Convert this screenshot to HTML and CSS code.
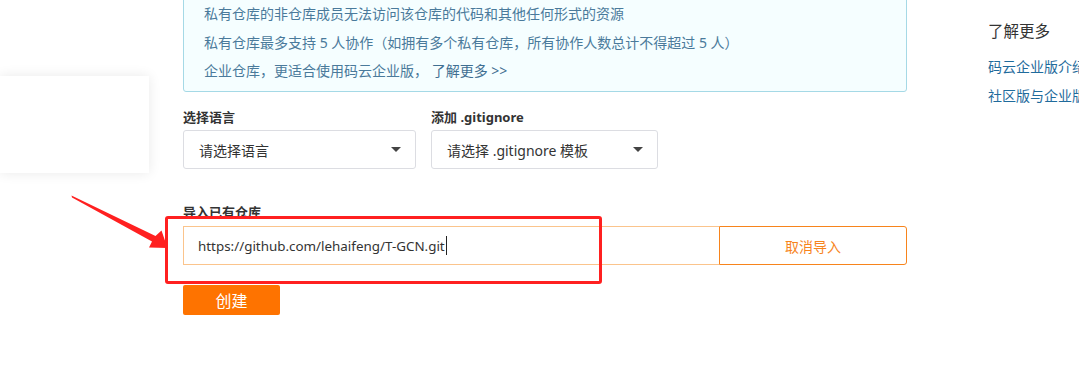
FILE: index.html
```html
<!DOCTYPE html>
<html lang="zh-CN">
<head>
<meta charset="utf-8">
<title>新建仓库</title>
<link rel="stylesheet" href="styles.css">
</head>
<body>
<div class="page">
  <div class="side-card"></div>

  <main class="main">
    <div class="info-box">
      <p>私有仓库的非仓库成员无法访问该仓库的代码和其他任何形式的资源</p>
      <p>私有仓库最多支持 5 人协作（如拥有多个私有仓库，所有协作人数总计不得超过 5 人）</p>
      <p>企业仓库，更适合使用码云企业版， <span class="more">了解更多 &gt;&gt;</span></p>
    </div>

    <div class="select-row">
      <div class="field field-lang">
        <div class="label">选择语言</div>
        <div class="select"><span>请选择语言</span><i class="caret"></i></div>
      </div>
      <div class="field field-ignore">
        <div class="label">添加 .gitignore</div>
        <div class="select"><span>请选择 .gitignore 模板</span><i class="caret"></i></div>
      </div>
    </div>

    <div class="import">
      <div class="label">导入已有仓库</div>
      <div class="import-row">
        <div class="url-input">https://github.com/lehaifeng/T-GCN.git<span class="cursor"></span></div>
        <button class="cancel-btn">取消导入</button>
      </div>
    </div>

    <button class="create-btn">创建</button>
  </main>

  <aside class="aside">
    <h3>了解更多</h3>
    <a>码云企业版介绍</a>
    <a>社区版与企业版对比</a>
  </aside>

  <div class="annot-rect"></div>
  <svg class="annot-arrow" width="110" height="70" viewBox="60 185 110 70">
    <polygon fill="#ff2020" points="71.5,195.5 73,196.2 155.5,236 161.5,230.5 167.5,248 149,247.5 152,241.5 72,197.5"/>
  </svg>
</div>
</body>
</html>
```

FILE: styles.css
```css
* { box-sizing: border-box; }
html, body { margin: 0; padding: 0; background: #fff; }
body {
  font-family: "Noto Sans", "Noto Sans CJK SC", sans-serif;
  color: #333;
  width: 1079px;
  height: 391px;
  overflow: hidden;
}
.page {
  position: relative;
  display: flex;
  padding-left: 183px;
  height: 391px;
}
.side-card {
  position: absolute;
  left: 0;
  top: 76px;
  width: 149px;
  height: 97px;
  background: #fff;
  box-shadow: 0 0 12px rgba(0,0,0,0.09);
}
.main { width: 724px; flex: none; }

.info-box {
  margin-top: -9px;
  padding: 8px 20px 9px;
  background: #f5feff;
  border: 1px solid #a5d9e6;
  border-radius: 3px;
  height: 101px;
}
.info-box p {
  margin: 0;
  font-size: 14px;
  line-height: 28.5px;
  color: #4a7a9b;
  white-space: nowrap;
}
.info-box .more { color: #3f6f92; }

.label {
  font-size: 13px;
  line-height: 20px;
  font-weight: bold;
  color: #333;
}
.select-row {
  display: flex;
  gap: 15px;
  margin-top: 15px;
}
.field-lang { width: 233px; }
.field-ignore { width: 227px; }
.select {
  margin-top: 3px;
  height: 39px;
  border: 1px solid #dcdde2;
  border-radius: 3px;
  display: flex;
  align-items: center;
  justify-content: space-between;
  padding: 0 14px 0 15px;
  font-size: 14px;
  color: #333;
}
.caret {
  width: 0;
  height: 0;
  border-left: 5px solid transparent;
  border-right: 5px solid transparent;
  border-top: 5px solid #444;
}

.import { margin-top: 33px; }
.import-row {
  margin-top: 4px;
  display: flex;
  height: 39px;
}
.url-input {
  width: 536px;
  border: 1px solid #fbc48c;
  border-right: none;
  display: flex;
  align-items: center;
  padding-left: 14px;
  font-size: 13.4px;
  color: #333;
}
.cursor {
  display: inline-block;
  width: 1px;
  height: 19px;
  background: #222;
  margin-left: 1px;
}
.cancel-btn {
  width: 188px;
  border: 1px solid #f7841c;
  border-radius: 0 3px 3px 0;
  background: #fff;
  color: #f7841c;
  font-family: inherit;
  font-size: 14px;
  cursor: pointer;
}
.create-btn {
  margin-top: 20px;
  width: 97px;
  height: 30px;
  border: none;
  border-radius: 2px;
  background: #fe7300;
  color: #fff;
  font-family: inherit;
  font-size: 16px;
  display: block;
}

.aside {
  margin-left: 81px;
  padding-top: 20px;
  white-space: nowrap;
  min-width: 0;
  overflow: hidden;
}
.aside h3 {
  margin: 0 0 10px;
  font-weight: normal;
  font-size: 15.5px;
  line-height: 22px;
  color: #333;
}
.aside a {
  display: block;
  font-size: 14px;
  line-height: 29px;
  color: #1f6b9c;
}

.annot-rect {
  position: absolute;
  left: 165px;
  top: 216px;
  width: 437px;
  height: 68px;
  border: 3px solid #ff2020;
  border-radius: 3px;
}
.annot-arrow {
  position: absolute;
  left: 60px;
  top: 185px;
}
```
